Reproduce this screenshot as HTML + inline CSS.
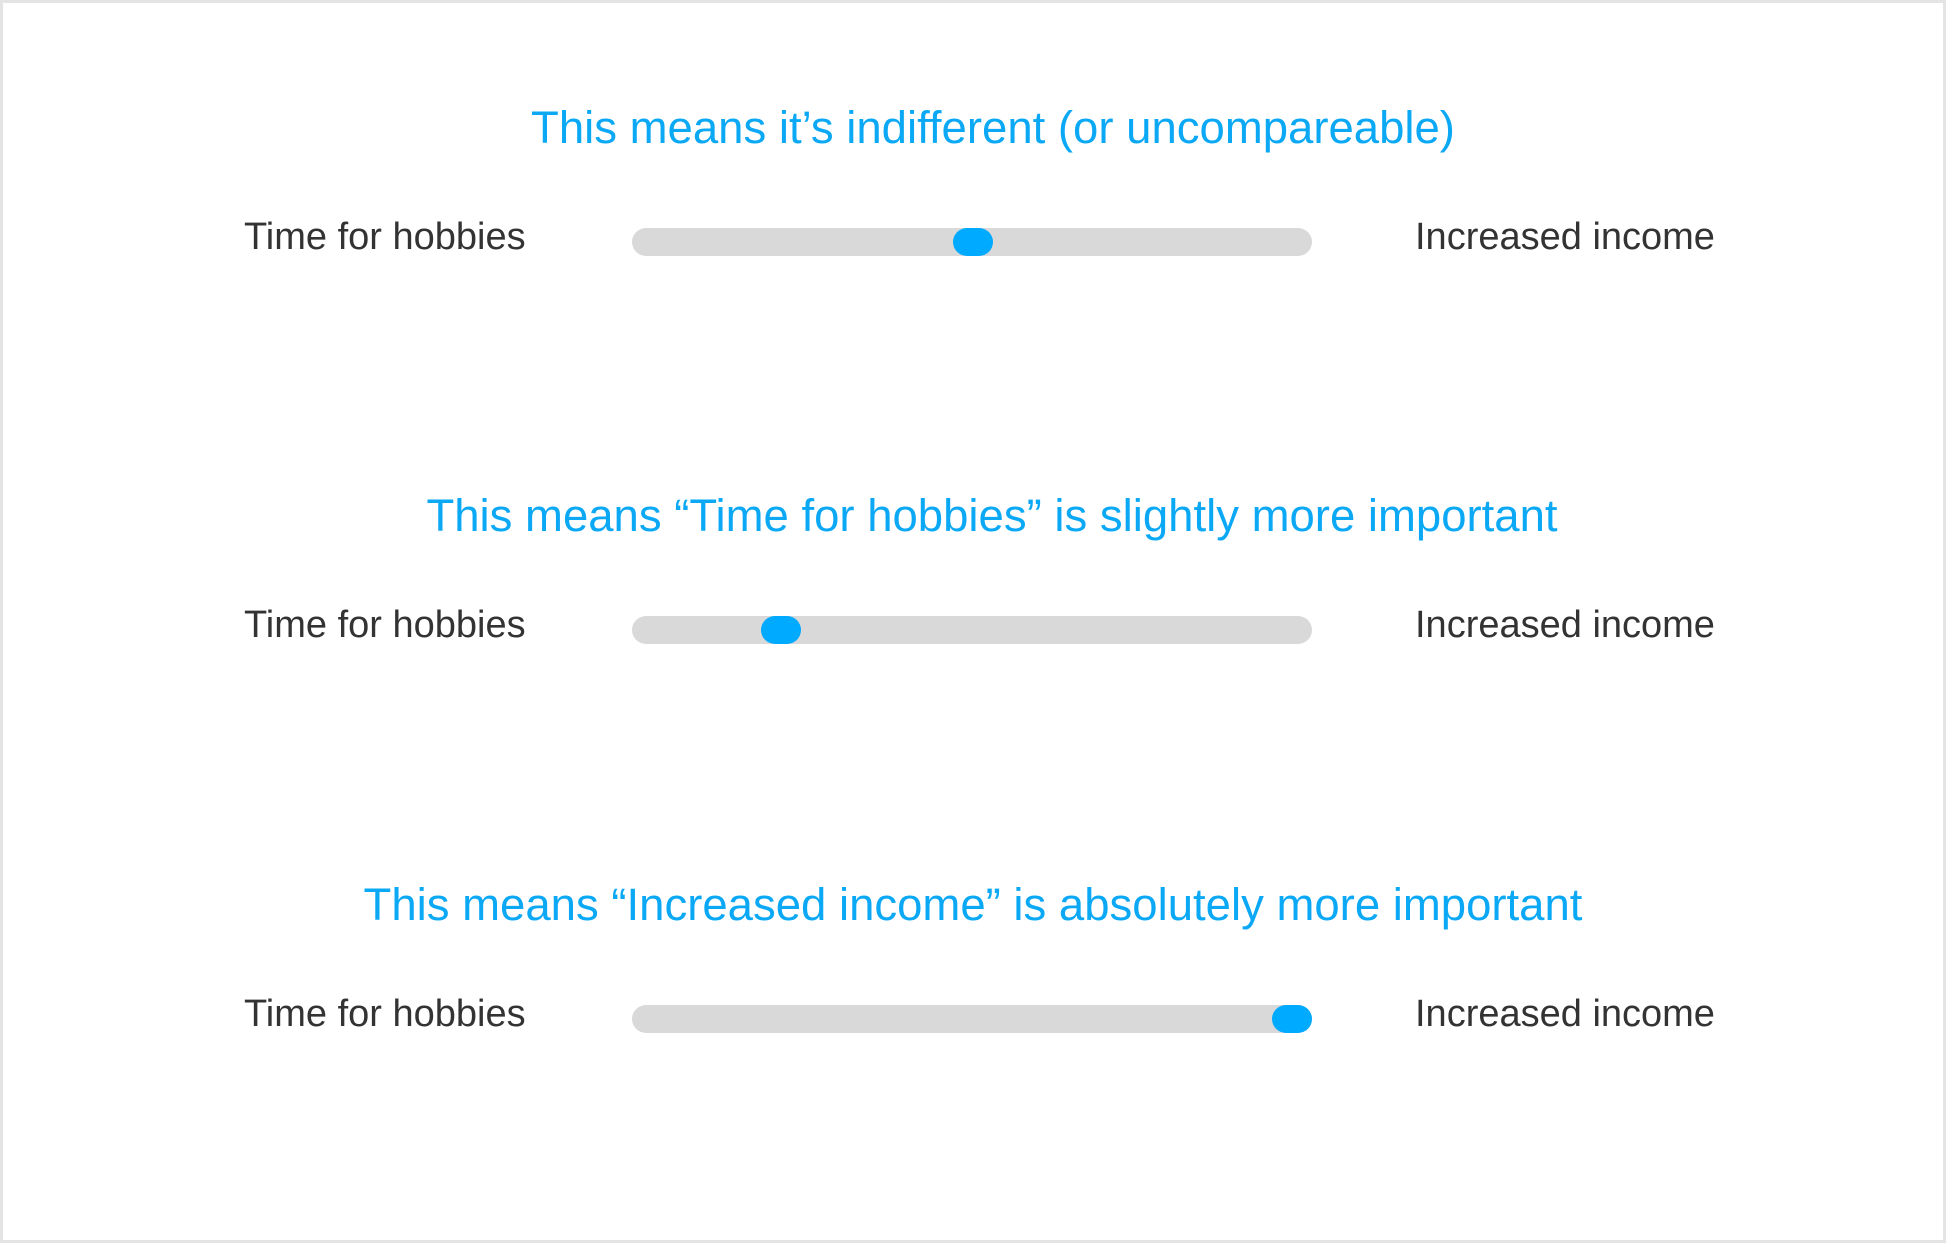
<!DOCTYPE html>
<html><head><style>
body{margin:0;width:1946px;height:1243px;background:#fff;position:relative;overflow:hidden;font-family:"Liberation Sans",sans-serif}
.frame{position:absolute;left:0;top:0;width:1940px;height:1237px;border:3px solid #e4e4e4}
.h{position:absolute;left:0;width:1946px;text-align:center;color:#0aa8f5;font-size:45.5px;line-height:50px}
.l{position:absolute;color:#333;font-size:38px;line-height:44px}
.t{position:absolute;left:632px;width:680px;height:28px;border-radius:14px;background:#d9d9d9}
.k{position:absolute;top:0;width:40px;height:28px;border-radius:14px;background:#00aaff}
</style></head><body>
<div class="frame"></div>
<div class="h" style="top:103px;left:20px">This means it’s indifferent (or uncompareable)</div>
<div class="l" style="left:244px;top:215px">Time for hobbies</div>
<div class="t" style="top:228px"><div class="k" style="left:321px"></div></div>
<div class="l" style="left:1415px;top:215px">Increased income</div>

<div class="h" style="top:491px;left:19px">This means “Time for hobbies” is slightly more important</div>
<div class="l" style="left:244px;top:603px">Time for hobbies</div>
<div class="t" style="top:616px"><div class="k" style="left:129px"></div></div>
<div class="l" style="left:1415px;top:603px">Increased income</div>

<div class="h" style="top:880px">This means “Increased income” is absolutely more important</div>
<div class="l" style="left:244px;top:992px">Time for hobbies</div>
<div class="t" style="top:1005px"><div class="k" style="left:640px"></div></div>
<div class="l" style="left:1415px;top:992px">Increased income</div>
</body></html>
